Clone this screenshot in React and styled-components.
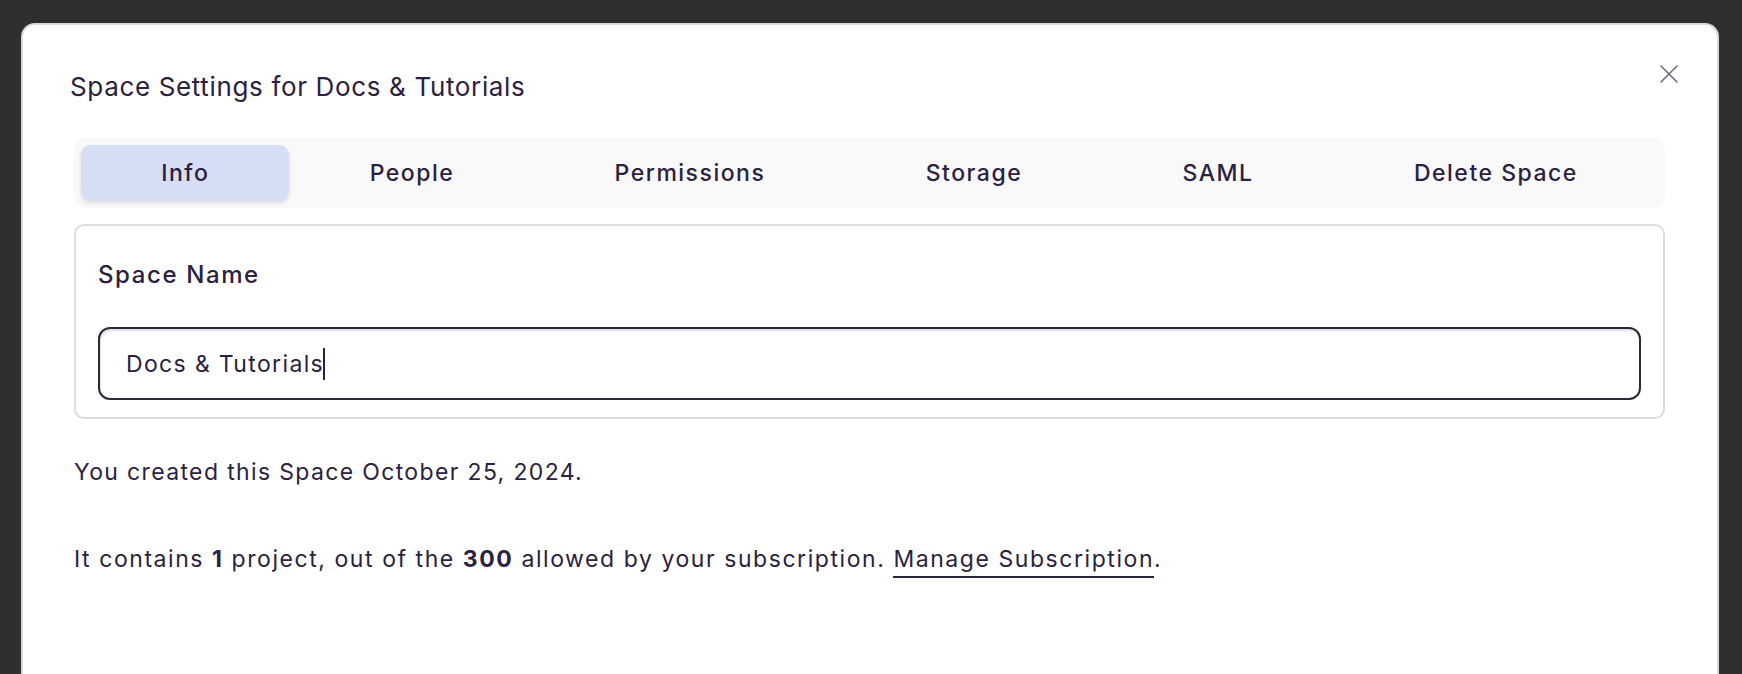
import React, { useState } from 'react';
import styled, { createGlobalStyle } from 'styled-components';

const GlobalStyle = createGlobalStyle`
  html, body {
    margin: 0;
    height: 100%;
    background: #2f2f2f;
    overflow: hidden;
  }
  body {
    font-family: Inter, "Noto Sans", sans-serif;
    color: #2c2140;
  }
`;

const Backdrop = styled.div`
  height: 674px;
  padding: 23px 23px 0 21px;
  box-sizing: border-box;
  display: flex;
`;

const Modal = styled.div`
  position: relative;
  flex: 1;
  background: #fff;
  border: 2px solid #d9d9d9;
  border-bottom: none;
  border-radius: 14px 14px 0 0;
  padding: 46px 52px 0 51px;
  box-sizing: border-box;
`;

const Title = styled.h2`
  margin: 0 0 35px -4px;
  font-size: 26px;
  line-height: 32px;
  font-weight: 400;
  letter-spacing: 0.65px;
`;

const CloseButton = styled.button`
  position: absolute;
  top: 37px;
  right: 36px;
  width: 24px;
  height: 24px;
  padding: 0;
  border: none;
  background: none;
  cursor: pointer;
  display: flex;
  align-items: center;
  justify-content: center;
`;

const TabBar = styled.div`
  display: flex;
  padding: 7px;
  background: #f9f9f9;
  border-radius: 12px;
`;

const Tab = styled.button`
  flex: 1 1 auto;
  height: 56px;
  border: none;
  border-radius: 10px;
  font-family: inherit;
  font-size: 23px;
  font-weight: 500;
  letter-spacing: 1.5px;
  color: #2c2140;
  cursor: pointer;
  background: ${(p) => (p.$active ? '#d6def5' : 'transparent')};
  box-shadow: ${(p) => (p.$active ? '0 2px 4px rgba(40, 40, 80, 0.14)' : 'none')};
`;

const Card = styled.div`
  margin-top: 16px;
  border: 2px solid #dcdcdc;
  border-radius: 10px;
  padding: 34px 22px 17px;
`;

const Label = styled.label`
  display: block;
  font-size: 24px;
  line-height: 30px;
  font-weight: 500;
  letter-spacing: 1.6px;
  margin-bottom: 37px;
`;

const InputWrap = styled.div`
  position: relative;
`;

const NameInput = styled.input`
  display: block;
  width: 100%;
  box-sizing: border-box;
  height: 73px;
  padding: 0 26px;
  border: 2px solid #2d2838;
  border-radius: 12px;
  box-shadow: inset 1px 2px 2px rgba(0, 0, 0, 0.12);
  font-family: inherit;
  font-size: 23px;
  letter-spacing: 1.35px;
  color: #2c2140;
  outline: none;
  caret-color: transparent;
`;

/* mirrors the input text so the drawn caret sits right after it */
const CaretLayer = styled.div`
  position: absolute;
  inset: 0;
  padding: 0 28px;
  display: flex;
  align-items: center;
  pointer-events: none;
  font-size: 23px;
  letter-spacing: 1.35px;
  white-space: pre;
`;

const Ghost = styled.span`
  visibility: hidden;
`;

const Caret = styled.span`
  width: 2px;
  height: 32px;
  margin-left: -1px;
  background: #2c2140;
`;

const Text = styled.p`
  margin: ${(p) => p.$top}px 0 0;
  font-size: 23px;
  line-height: 32px;
  letter-spacing: ${(p) => p.$spacing}px;
`;

const Link = styled.a`
  color: inherit;
  text-decoration: none;
  border-bottom: 2px solid #2c2140;
  padding-bottom: 3px;
  cursor: pointer;
`;

const tabs = ['Info', 'People', 'Permissions', 'Storage', 'SAML', 'Delete Space'];

export default function App() {
  const [active, setActive] = useState('Info');
  const [name, setName] = useState('Docs & Tutorials');
  const [focused, setFocused] = useState(true);

  return (
    <>
      <GlobalStyle />
      <Backdrop>
        <Modal>
          <Title>Space Settings for Docs &amp; Tutorials</Title>
          <CloseButton aria-label="Close">
            <svg width="20" height="20" viewBox="0 0 20 20">
              <path d="M2 2 L18 18 M18 2 L2 18" stroke="#6e6880" strokeWidth="1.6" strokeLinecap="round" />
            </svg>
          </CloseButton>
          <TabBar>
            {tabs.map((t) => (
              <Tab key={t} $active={t === active} onClick={() => setActive(t)}>
                {t}
              </Tab>
            ))}
          </TabBar>
          <Card>
            <Label htmlFor="space-name">Space Name</Label>
            <InputWrap>
              <NameInput
                id="space-name"
                value={name}
                onChange={(e) => setName(e.target.value)}
                onFocus={() => setFocused(true)}
                onBlur={() => setFocused(false)}
              />
              {focused && (
                <CaretLayer>
                  <Ghost>{name}</Ghost>
                  <Caret />
                </CaretLayer>
              )}
            </InputWrap>
          </Card>
          <Text $top={37} $spacing={1.35}>You created this Space October 25, 2024.</Text>
          <Text $top={55} $spacing={1.56}>
            It contains <b>1</b> project, out of the <b>300</b> allowed by your subscription.{' '}
            <Link>Manage Subscription</Link>.
          </Text>
        </Modal>
      </Backdrop>
    </>
  );
}
